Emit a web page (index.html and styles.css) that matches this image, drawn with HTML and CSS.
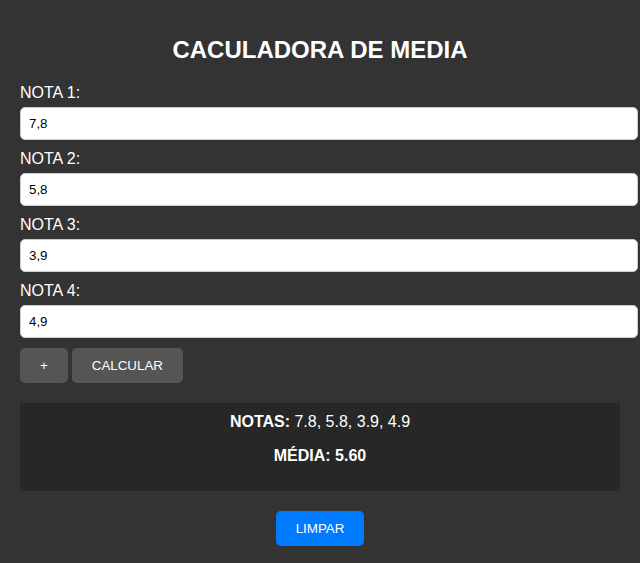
FILE: index.html
```html
<!DOCTYPE html>
<html lang="pt">
<head>
<meta charset="utf-8">
<title>Caculadora de Media</title>
<link rel="stylesheet" href="styles.css">
</head>
<body>
<div class="container">
  <h1 class="title">CACULADORA DE MEDIA</h1>
  <div class="field">
    <label class="label" for="n1">NOTA 1:</label>
    <input class="input" id="n1" type="text" value="7,8">
  </div>
  <div class="field">
    <label class="label" for="n2">NOTA 2:</label>
    <input class="input" id="n2" type="text" value="5,8">
  </div>
  <div class="field">
    <label class="label" for="n3">NOTA 3:</label>
    <input class="input" id="n3" type="text" value="3,9">
  </div>
  <div class="field">
    <label class="label" for="n4">NOTA 4:</label>
    <input class="input" id="n4" type="text" value="4,9">
  </div>
  <div class="actions">
    <button class="btn btn-gray" type="button">+</button>
    <button class="btn btn-gray" type="button">CALCULAR</button>
  </div>
  <div class="result">
    <p class="result-line"><strong>NOTAS:</strong> 7.8, 5.8, 3.9, 4.9</p>
    <p class="result-line"><strong>MÉDIA: 5.60</strong></p>
  </div>
  <div class="clear-row">
    <button class="btn btn-blue" type="button">LIMPAR</button>
  </div>
</div>
</body>
</html>
```

FILE: styles.css
```css
html, body {
  margin: 0;
  padding: 0;
  background: #333333;
}

body {
  font-family: "Liberation Sans", Arial, sans-serif;
  color: #ffffff;
  font-size: 16px;
}

.container {
  padding: 20px;
}

.title {
  font-size: 24px;
  font-weight: bold;
  text-align: center;
  margin: 16px 0 20px;
}

.field {
  display: block;
}

.label {
  display: block;
  font-size: 16px;
  margin-bottom: 5px;
}

.input {
  display: block;
  width: 100%;
  box-sizing: content-box;
  padding: 8px;
  margin: 0 0 10px;
  border: 1px solid #cccccc;
  border-radius: 5px;
  background: #ffffff;
  color: #000000;
  font-family: "Liberation Sans", Arial, sans-serif;
  font-size: 13.333px;
  line-height: 15px;
  height: 15px;
}

.actions {
  display: flex;
  gap: 4px;
}

.btn {
  border: none;
  border-radius: 5px;
  padding: 10px 20px;
  font-family: "Liberation Sans", Arial, sans-serif;
  font-size: 13.333px;
  line-height: 15px;
  color: #ffffff;
  cursor: pointer;
}

.btn-gray {
  background: #555555;
}

.btn-blue {
  background: #007bff;
}

.result {
  margin-top: 20px;
  background: #272727;
  padding: 10px 20px;
  text-align: center;
}

.result-line {
  margin: 0 0 16px;
  font-size: 16px;
}

.clear-row {
  margin-top: 20px;
  text-align: center;
}
```
